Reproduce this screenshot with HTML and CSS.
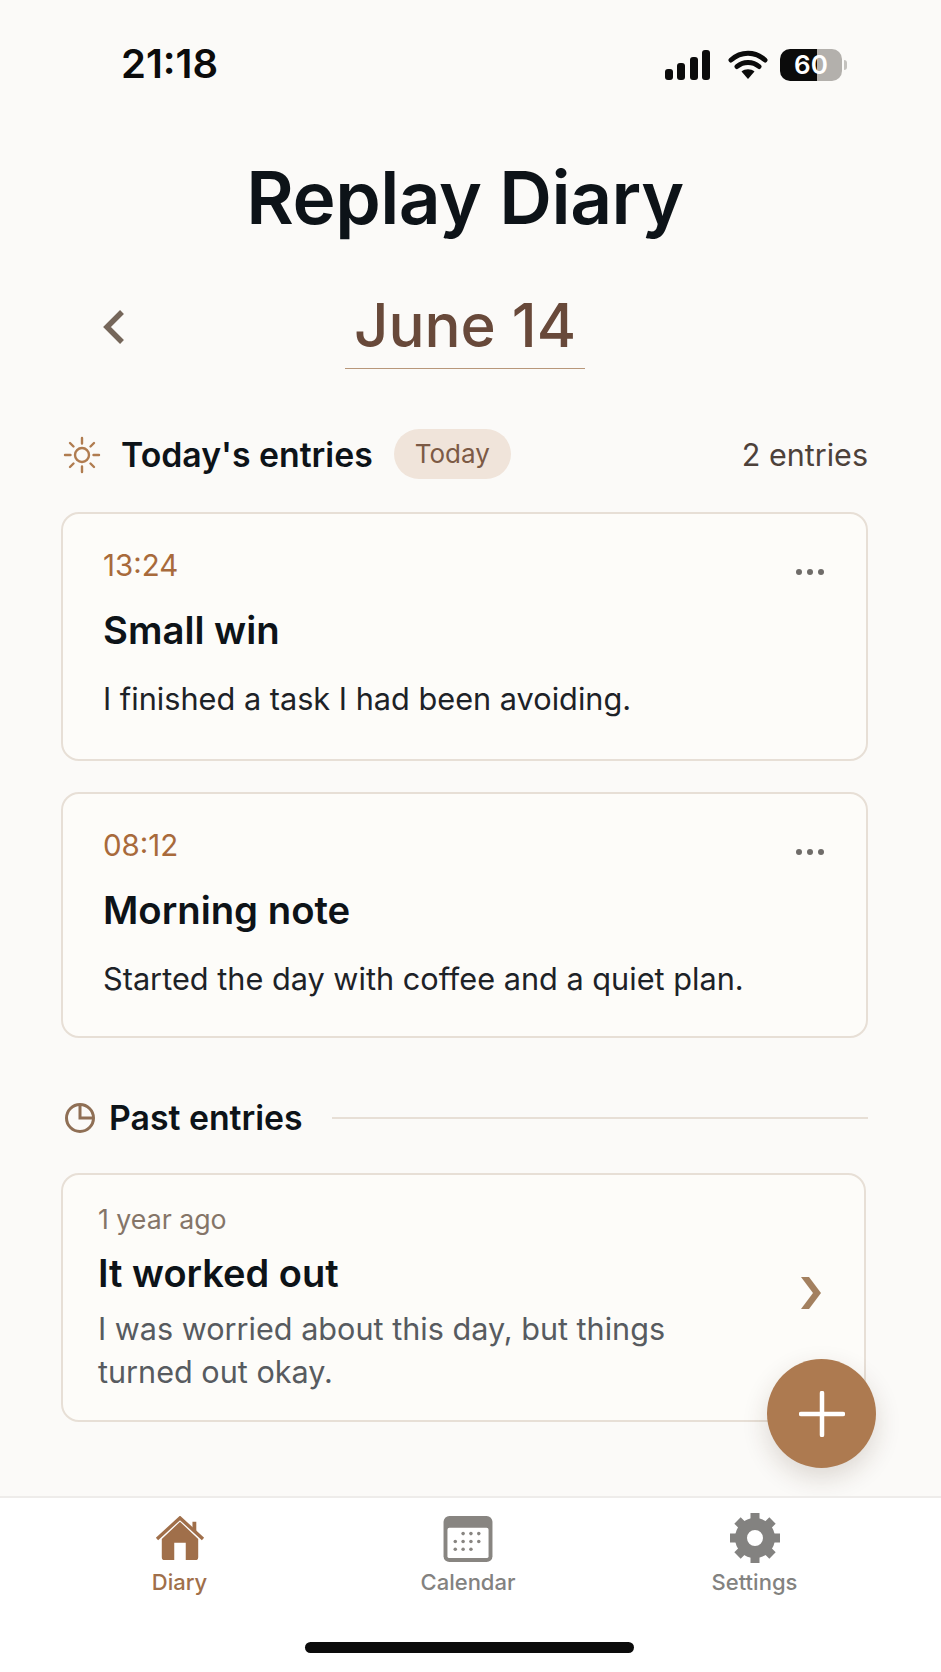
FILE: index.html
```html
<!DOCTYPE html>
<html lang="en">
<head>
<meta charset="utf-8">
<title>Replay Diary</title>
<link rel="stylesheet" href="styles.css">
</head>
<body>
<div class="screen">
  <header class="status">
    <span class="clock">21:18</span>
    <div class="status-icons">
      <svg class="signal" width="46" height="32" viewBox="0 0 46 32"><rect x="0" y="20" width="8" height="11" rx="3"/><rect x="12" y="14" width="8" height="17" rx="3"/><rect x="25" y="8" width="8" height="23" rx="3"/><rect x="37" y="1" width="8" height="30" rx="3"/></svg>
      <svg class="wifi" width="40" height="32" viewBox="0 0 40 32"><path d="M3 11C13 2 27 2 37 11M9 17.500C15 12 25 12 31 17.500" fill="none" stroke="#0b0b0b" stroke-width="5" stroke-linecap="round"/><path d="M13.500 22.500C17 19.500 23 19.500 26.500 22.500L20 30Z" fill="#0b0b0b"/></svg>
      <div class="battery"><span class="battery-text">60</span></div>
      <span class="battery-cap"></span>
    </div>
  </header>

  <h1 class="app-title">Replay Diary</h1>

  <nav class="date-row">
    <svg class="date-back" width="24" height="36" viewBox="0 0 24 36"><path d="M20 3 5 18l15 15" fill="none" stroke="#75665a" stroke-width="5.500"/></svg>
    <h2 class="date">June 14</h2>
  </nav>

  <section class="today">
    <div class="section-head">
      <svg class="sun" width="38" height="38" viewBox="0 0 38 38" fill="none" stroke="#b07c50" stroke-width="2.400" stroke-linecap="round"><circle cx="19" cy="19" r="7"/><path d="M19 2v5.500M19 30.500V36M2 19h5.500M30.500 19H36M7 7l3.500 3.500M27.500 27.500 31 31M7 31l3.500-3.500M27.500 10.500 31 7"/></svg>
      <h3 class="section-title">Today's entries</h3>
      <span class="pill">Today</span>
      <span class="count">2 entries</span>
    </div>

    <article class="card entry first">
      <div class="entry-top">
        <time class="entry-time">13:24</time>
        <span class="dots"><i></i><i></i><i></i></span>
      </div>
      <h4 class="entry-title">Small win</h4>
      <p class="entry-body">I finished a task I had been avoiding.</p>
    </article>

    <article class="card entry second">
      <div class="entry-top">
        <time class="entry-time">08:12</time>
        <span class="dots"><i></i><i></i><i></i></span>
      </div>
      <h4 class="entry-title">Morning note</h4>
      <p class="entry-body">Started the day with coffee and a quiet plan.</p>
    </article>
  </section>

  <section class="past">
    <div class="past-head">
      <svg class="clock-icon" width="32" height="32" viewBox="0 0 32 32" fill="none" stroke="#8f6f55" stroke-width="3"><circle cx="16" cy="16" r="13.500"/><path d="M16 3v13h13"/></svg>
      <h3 class="section-title">Past entries</h3>
      <span class="rule"></span>
    </div>
    <article class="card past-card">
      <div class="past-text">
        <span class="past-age">1 year ago</span>
        <h4 class="past-title">It worked out</h4>
        <p class="past-body">I was worried about this day, but things turned out okay.</p>
      </div>
      <svg class="past-chevron" width="20" height="32" viewBox="0 0 20 32"><path d="M0 0h8l12 16L8 32H0l12-16Z" fill="#a3805f"/></svg>
    </article>
  </section>

  <button class="fab" aria-label="Add entry">
    <svg width="46" height="46" viewBox="0 0 46 46"><path d="M23 2v42M2 23h42" stroke="#fff" stroke-width="4.500" stroke-linecap="round"/></svg>
  </button>

  <footer class="tabbar">
    <div class="tabs">
      <a class="tab active">
        <svg width="52" height="46" viewBox="0 0 52 48"><path d="M26 6 7 24v19a3 3 0 0 0 3 3h32a3 3 0 0 0 3-3V24Zm-6 22h12v18H20Z" fill-rule="evenodd" fill="#a06f4a"/><path d="M2 24 26 2l24 22" fill="none" stroke="#a06f4a" stroke-width="3.500"/><path d="M39 6h4v12l-4-4Z" fill="#a06f4a"/></svg>
        <span>Diary</span>
      </a>
      <a class="tab">
        <svg width="50" height="46" viewBox="0 0 50 47"><rect width="50" height="47" rx="6" fill="#888581"/><rect x="4" y="12" width="42" height="31" rx="2" fill="#fff"/><g fill="#888581"><circle cx="20" cy="18" r="1.800"/><circle cx="28" cy="18" r="1.800"/><circle cx="36" cy="18" r="1.800"/><circle cx="12" cy="26" r="1.800"/><circle cx="20" cy="26" r="1.800"/><circle cx="28" cy="26" r="1.800"/><circle cx="36" cy="26" r="1.800"/><circle cx="12" cy="34" r="1.800"/><circle cx="20" cy="34" r="1.800"/><circle cx="28" cy="34" r="1.800"/></g></svg>
        <span>Calendar</span>
      </a>
      <a class="tab">
        <svg class="gear" width="52" height="52" viewBox="0 0 52 52"><circle cx="26" cy="26" r="14" fill="none" stroke="#838280" stroke-width="12"/><g stroke="#838280" stroke-width="9"><path d="M26 1v10M26 41v10M1 26h10M41 26h10M8.500 8.500l7 7M36.500 36.500l7 7M8.500 43.500l7-7M36.500 15.500l7-7"/></g></svg>
        <span>Settings</span>
      </a>
    </div>
    <div class="home-bar"></div>
  </footer>
</div>
</body>
</html>
```
FILE: styles.css
```css
* { box-sizing: border-box; }
html, body { margin: 0; padding: 0; }
body {
  background: #fbfaf8;
  color: #0d1318;
  font-family: Inter, "Liberation Sans", sans-serif;
}
h1, h2, h3, h4, p { margin: 0; }
.screen {
  position: relative;
  width: 941px;
  height: 1672px;
  overflow: hidden;
  display: flex;
  flex-direction: column;
}
.status {
  height: 92px;
  padding: 42px 94px 0 121px;
  display: flex;
  justify-content: space-between;
  align-items: flex-start;
}
.clock {
  font-size: 40px;
  line-height: 44px;
  font-weight: 600;
  color: #0b0b0b;
}
.status-icons {
  display: flex;
  align-items: center;
  height: 44px;
  padding-top: 1px;
}
.signal { fill: #0b0b0b; margin-right: 17px; }
.wifi { margin-right: 12px; }
.battery {
  width: 62px;
  height: 32px;
  border-radius: 10px;
  background: linear-gradient(90deg, #0b0b0b 0 60%, #b3b0ac 60%);
  display: flex;
  align-items: center;
  justify-content: center;
}
.battery-text {
  font-size: 26px;
  font-weight: 600;
  color: #fff;
  line-height: 1;
}
.battery-cap {
  width: 3px;
  height: 10px;
  margin-left: 2px;
  border-radius: 0 3px 3px 0;
  background: #c4c2be;
}
.app-title {
  text-align: center;
  font-size: 73px;
  line-height: 88px;
  font-weight: 600;
  letter-spacing: -0.5px;
  padding: 62px 11px 0 0;
}
.date-row {
  position: relative;
  display: flex;
  justify-content: center;
  margin-top: 43px;
  height: 103px;
  padding-right: 11px;
}
.date-back { position: absolute; left: 102px; top: 24px; }
.date {
  width: 240px;
  height: 84px;
  text-align: center;
  font-size: 60px;
  line-height: 80px;
  font-weight: 500;
  color: #68493a;
  border-bottom: 1px solid #b8977a;
}
.today { padding: 0 73px 0 61px; margin-top: 42px; }
.section-head {
  display: flex;
  align-items: center;
  height: 50px;
  padding-left: 2px;
}
.sun { margin-right: 20px; flex: none; }
.section-title {
  font-size: 33.800px;
  line-height: 42px;
  font-weight: 600;
}
.pill {
  margin-left: 21px;
  width: 117px;
  height: 50px;
  margin-top: -2px;
  border-radius: 25px;
  background: #f0e4da;
  color: #7c5a45;
  font-size: 26px;
  line-height: 50px;
  text-align: center;
}
.count {
  margin-left: auto;
  font-size: 30.500px;
  margin-top: -2px;
  color: #4d413a;
}
.card {
  background: #fdfcf9;
  border: 2px solid #e7dfd6;
  border-radius: 18px;
}
.entry { padding: 32px 40px 0; }
.entry.first { height: 249px; margin-top: 32px; }
.entry.second { height: 246px; margin-top: 31px; }
.entry-top {
  display: flex;
  justify-content: space-between;
  align-items: flex-start;
}
.entry-time {
  font-size: 29.500px;
  line-height: 38px;
  color: #a86a3b;
}
.dots { display: flex; gap: 5px; margin: 23px 2px 0 0; }
.dots i {
  width: 6px;
  height: 6px;
  border-radius: 50%;
  background: #6f6c69;
}
.entry-title {
  font-size: 38.300px;
  line-height: 44px;
  font-weight: 600;
  margin-top: 24px;
}
.entry-body {
  font-size: 30.700px;
  line-height: 40px;
  margin-top: 27px;
  color: #1d2227;
}
.past { padding: 0 73px 0 61px; margin-top: 59px; }
.past-head {
  display: flex;
  align-items: center;
  height: 42px;
  padding-left: 3px;
}
.clock-icon { margin-right: 13px; flex: none; }
.rule {
  flex: 1;
  height: 2px;
  margin-left: 29px;
  background: #e7dfd6;
}
.past-card {
  width: 805px;
  height: 249px;
  margin-top: 34px;
  padding: 27px 0 0 35px;
  display: flex;
  justify-content: space-between;
  align-items: flex-start;
}
.past-text { width: 600px; }
.past-age {
  display: block;
  font-size: 26.700px;
  line-height: 34px;
  color: #857568;
}
.past-title {
  font-size: 38px;
  line-height: 46px;
  font-weight: 600;
  margin-top: 14px;
}
.past-body {
  font-size: 30.600px;
  line-height: 43px;
  margin-top: 11px;
  color: #575b60;
}
.past-chevron { margin: 75px 43px 0 0; flex: none; }
.fab {
  position: absolute;
  left: 767px;
  top: 1359px;
  width: 109px;
  height: 109px;
  padding: 0;
  border: 0;
  border-radius: 50%;
  background: #ad7a50;
  box-shadow: 0 10px 26px rgba(60, 40, 20, 0.16);
  display: flex;
  align-items: center;
  justify-content: center;
}
.tabbar {
  position: absolute;
  left: 0;
  right: 0;
  bottom: 0;
  height: 176px;
  background: #fff;
  border-top: 2px solid #eeecea;
  display: flex;
  flex-direction: column;
  align-items: center;
}
.tabs {
  display: grid;
  grid-template-columns: 290px 287px 286px;
  width: 864px;
  margin: 18px 8px 0 0;
}
.tab {
  display: flex;
  flex-direction: column;
  align-items: center;
  font-size: 22px;
  line-height: 28px;
  font-weight: 500;
  color: #838280;
  height: 80px;
  justify-content: space-between;
}
.gear { margin-top: -4px; }
.tab.active { color: #a06f4a; }
.home-bar {
  width: 329px;
  height: 11px;
  border-radius: 6px;
  background: #0b0b0b;
  margin: 46px 2px 0 0;
}
```
